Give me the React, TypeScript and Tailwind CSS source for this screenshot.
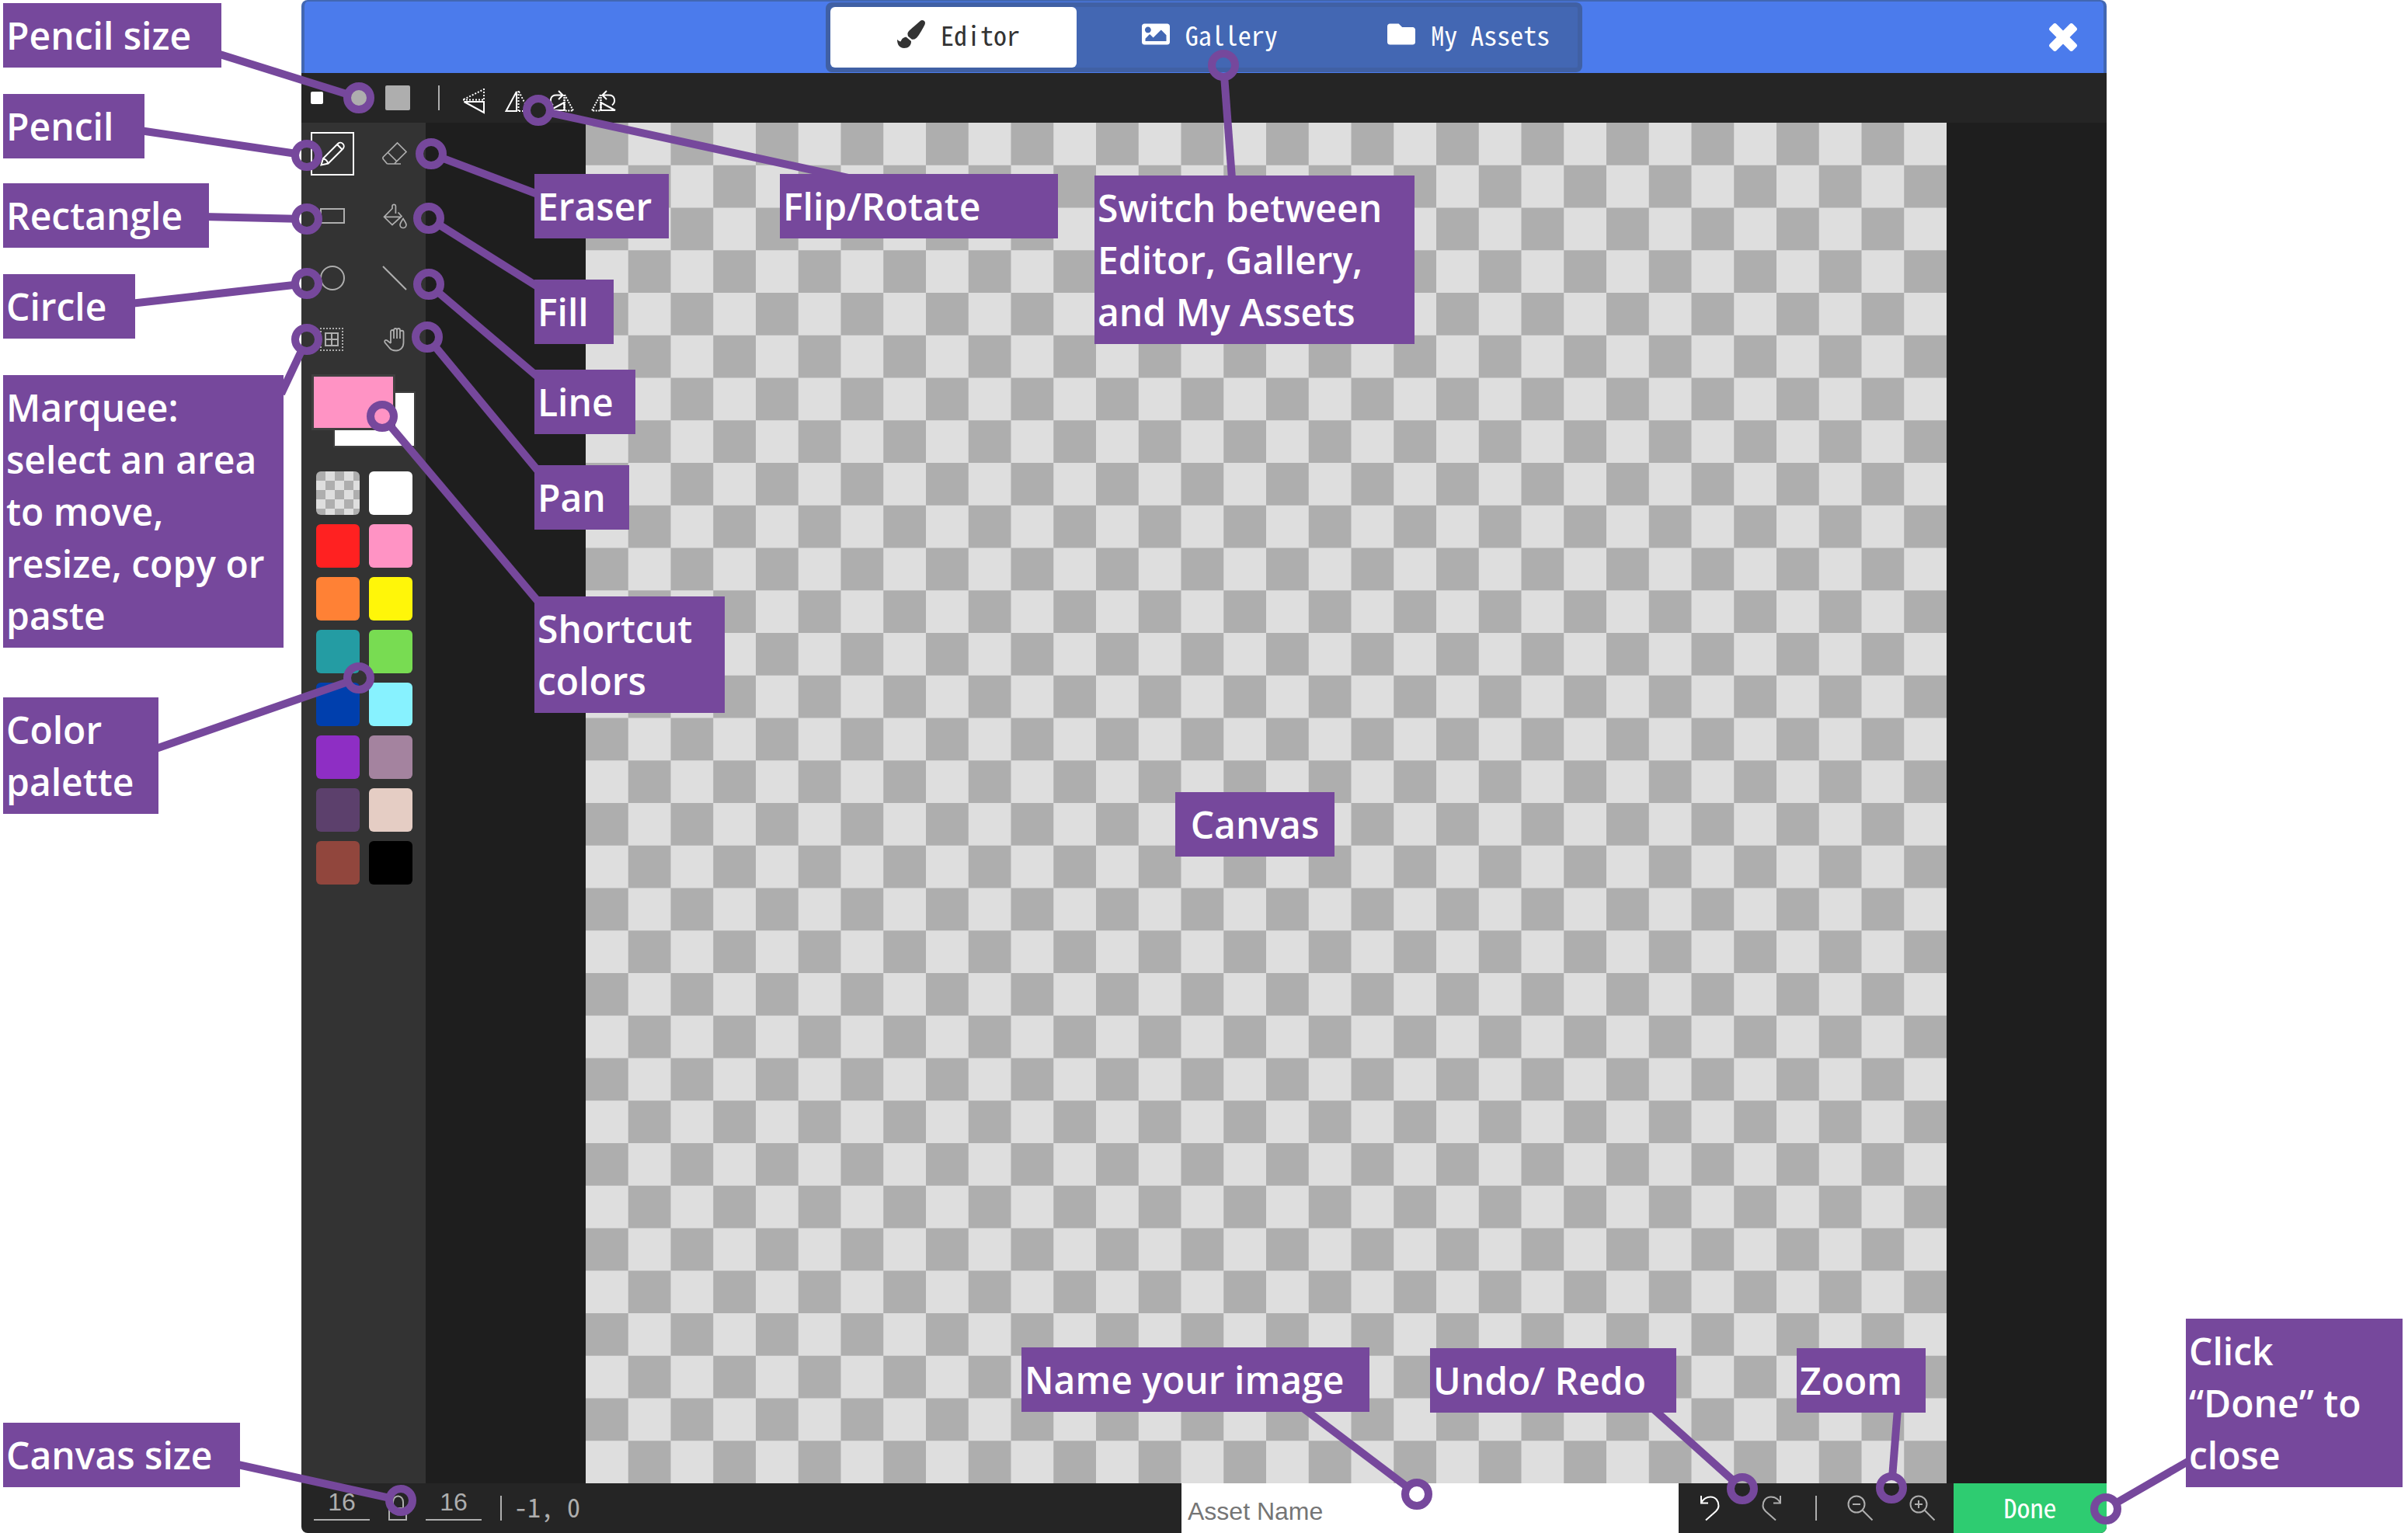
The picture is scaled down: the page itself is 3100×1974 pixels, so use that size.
import React from "react";
import { FaFolder, FaImage, FaPaintBrush } from "react-icons/fa";

const MONO = "font-['Noto_Sans_Mono_CJK_SC','Liberation_Mono',monospace]";

type IconProps = { children: React.ReactNode; className?: string };

function Icon({ children, className = "" }: IconProps) {
  return (
    <svg
      viewBox="0 0 32 32"
      className={`size-8 shrink-0 overflow-visible ${className}`}
      fill="none"
      stroke="currentColor"
      strokeWidth="2"
      aria-hidden="true"
    >
      {children}
    </svg>
  );
}

const tools = [
  {
    name: "Pencil",
    icon: (
      <>
        <path d="M1.5 30.5 4 22 23 3a4.6 4.6 0 0 1 6.5 6.5L10.500 28.500Z" />
        <path d="M4 22.500c3 0 6 3 6 6M22 4l6.500 6.500" />
      </>
    ),
  },
  {
    name: "Eraser",
    icon: <path d="M6.500 29 1 22.500V20.500L19.500 2 31 13.500 16 28.500M6.500 29H24M7.500 14.500 18.500 25.500" strokeWidth="1.700" />,
  },
  { name: "Rectangle", icon: <rect x="1" y="7" width="30" height="18" /> },
  {
    name: "Fill",
    icon: (
      <>
        <path d="M13 6.500 2.500 17.300 13 27.500 25 16.500 20.500 11.500M2.500 17.300H25M13 7V3.500a2.200 2.200 0 0 1 4.400 0V13" strokeWidth="1.700" />
        <path d="M27 19.500c-2.500 4-4 6-4 8a4 4 0 0 0 8 0c0-2-1.500-4-4-8Z" strokeWidth="1.700" />
      </>
    ),
  },
  { name: "Circle", icon: <circle cx="16" cy="16" r="15" /> },
  { name: "Line", icon: <path d="M1 1 31 31" /> },
  {
    name: "Marquee",
    icon: (
      <>
        <path d="M0 1H30M0 29H30M1 0V30M29 0V30" strokeDasharray="2 2" />
        <path d="M7 7H23V23H7ZM15 7V23M7 15H23" />
      </>
    ),
  },
  {
    name: "Pan",
    icon: (
      <path
        d="M11 20V5a2 2 0 0 1 4 0V14M15 5V3a2 2 0 0 1 4 0V14M19 3a2 2 0 0 1 4 0V14M23 6a2.200 2.200 0 0 1 4.500 0V19c0 6.500-4 10.500-9.500 10.500-4 0-7-1-9-4L3.500 19c-1-2.500 1-4 3-2.500L11 20"
        strokeWidth="1.800"
      />
    ),
  },
];

const rotateShape = (
  <>
    <path d="M11.500 18 30 28H11.500Z" />
    <path d="M11 8 0 28.500H11" strokeDasharray="2 1.500" />
    <path d="M11.500 8V28" strokeDasharray="2 1" strokeWidth="2.500" />
    <path d="M19 3 13.500 8.500 19 14M14 8.500H22c8 0 9 9 4 13" />
  </>
);

const transforms = [
  {
    name: "Flip vertical",
    icon: (
      <>
        <path d="M3.500 17H29V31Z" />
        <path d="M2 14.500H29M29 0V14M3 14 29 1" strokeDasharray="2 2" />
      </>
    ),
  },
  {
    name: "Flip horizontal",
    icon: (
      <>
        <path d="M15 4V29H1.500Z" />
        <path d="M17.500 3V29M18 29H31M18 4 31 29" strokeDasharray="2 2" />
      </>
    ),
  },
  { name: "Rotate clockwise", icon: <g transform="translate(32 0) scale(-1 1)">{rotateShape}</g> },
  { name: "Rotate counterclockwise", icon: rotateShape },
];

const palette = [
  "bg-[conic-gradient(#dedede_25%,#aeaeae_0_50%,#dedede_0_75%,#aeaeae_0)] bg-size-[24px_24px]",
  "bg-white",
  "bg-[#ff2121]",
  "bg-[#ff93c4]",
  "bg-[#ff8135]",
  "bg-[#fff609]",
  "bg-[#249ca3]",
  "bg-[#78dc52]",
  "bg-[#003fad]",
  "bg-[#87f2ff]",
  "bg-[#8e2ec4]",
  "bg-[#a4839f]",
  "bg-[#5c406c]",
  "bg-[#e5cdc4]",
  "bg-[#91463d]",
  "bg-black",
];

// Each callout: label box, and the line from the box (x1, y1) to its ring (x2, y2).
const callouts = [
  { text: "Pencil size", box: "left-[4px] top-[4px] w-[281px]", line: [280, 69, 462, 126] },
  { text: "Pencil", box: "left-[4px] top-[121px] w-[182px]", line: [180, 168, 395, 200] },
  { text: "Rectangle", box: "left-[4px] top-[236px] w-[265px]", line: [262, 279, 395, 282] },
  { text: "Circle", box: "left-[4px] top-[353px] w-[170px]", line: [168, 391, 395, 365] },
  {
    text: "Marquee:\nselect an area\nto move,\nresize, copy or\npaste",
    box: "left-[4px] top-[483px] w-[361px]",
    line: [362, 507, 395, 437],
  },
  { text: "Color\npalette", box: "left-[4px] top-[898px] w-[200px]", line: [198, 965, 462, 873] },
  { text: "Canvas size", box: "left-[4px] top-[1832px] w-[305px]", line: [302, 1885, 516, 1932] },
  { text: "Eraser", box: "left-[688px] top-[224px] w-[173px]", line: [692, 250, 555, 198] },
  { text: "Fill", box: "left-[688px] top-[360px] w-[102px]", line: [692, 369, 552, 281] },
  { text: "Line", box: "left-[688px] top-[476px] w-[130px]", line: [692, 485, 552, 366] },
  { text: "Pan", box: "left-[688px] top-[599px] w-[122px]", line: [694, 608, 550, 434] },
  { text: "Shortcut\ncolors", box: "left-[688px] top-[768px] w-[245px]", line: [694, 776, 492, 536] },
  { text: "Flip/Rotate", box: "left-[1004px] top-[224px] w-[358px]", line: [1110, 233, 693, 142] },
  {
    text: "Switch between\nEditor, Gallery,\nand My Assets",
    box: "left-[1409px] top-[226px] w-[412px]",
    line: [1586, 230, 1575, 84],
  },
  { text: "Canvas", box: "left-[1513px] top-[1020px] w-[205px] text-center", line: null },
  { text: "Name your image", box: "left-[1315px] top-[1735px] w-[448px]", line: [1676, 1812, 1824, 1924] },
  { text: "Undo/ Redo", box: "left-[1841px] top-[1736px] w-[317px]", line: [2126, 1812, 2243, 1917] },
  { text: "Zoom", box: "left-[2313px] top-[1736px] w-[166px]", line: [2443, 1814, 2435, 1916] },
  { text: "Click\n“Done” to\nclose", box: "left-[2814px] top-[1698px] w-[279px]", line: [2820, 1880, 2711, 1943] },
];

function Callouts() {
  return (
    <div className="pointer-events-none absolute inset-0 overflow-hidden font-['Open_Sans',sans-serif]">
      <svg className="absolute inset-0 h-full w-full" fill="none" stroke="#76489c" strokeWidth="10" aria-hidden="true">
        {callouts.map(({ text, line }) => {
          if (!line) return null;
          const [x1, y1, x2, y2] = line;
          const length = Math.hypot(x2 - x1, y2 - y1);
          const stop = (length - 15) / length;
          return (
            <g key={text}>
              <line x1={x1} y1={y1} x2={x1 + (x2 - x1) * stop} y2={y1 + (y2 - y1) * stop} />
              <circle cx={x2} cy={y2} r="15" />
            </g>
          );
        })}
      </svg>
      {callouts.map(({ text, box }) => (
        <p
          key={text}
          className={`absolute bg-[#76489c] px-1 py-2 text-[48px] leading-[67px] font-[650] whitespace-pre text-white ${box}`}
        >
          {text}
        </p>
      ))}
    </div>
  );
}

function Header() {
  return (
    <header className="flex h-[94px] shrink-0 items-center rounded-t-lg border-x-4 border-t-2 border-[#4267b2] bg-[#4b7bec] px-8">
      <div className="flex-1" />
      <nav
        className={`grid h-[90px] w-[974px] grid-cols-3 rounded-lg border-6 border-[#4060a4] bg-[#4367b3] text-[34px] text-white ${MONO}`}
      >
        <button className="mr-1 flex items-center gap-5 rounded-md bg-white pb-2 pl-[86px] text-[#333]">
          <FaPaintBrush className="size-9" aria-hidden="true" />
          Editor
        </button>
        <button className="flex items-center gap-5 pb-2 pl-20">
          <FaImage className="size-9" aria-hidden="true" />
          Gallery
        </button>
        <button className="flex items-center gap-5 pb-2 pl-[76px]">
          <FaFolder className="size-9" aria-hidden="true" />
          My Assets
        </button>
      </nav>
      <div className="flex flex-1 justify-end">
        <button aria-label="Close" className="p-0.5 text-white">
          <svg viewBox="-18 -18 36 36" className="size-9" fill="currentColor" aria-hidden="true">
            <rect x="-21" y="-6" width="42" height="12" rx="3" transform="rotate(45)" />
            <rect x="-21" y="-6" width="42" height="12" rx="3" transform="rotate(-45)" />
          </svg>
        </button>
      </div>
    </header>
  );
}

function Toolbar() {
  return (
    <div className="flex h-16 shrink-0 items-center bg-[#252525] pl-3 text-white">
      <button aria-label="Small pencil" className="size-4 rounded-xs bg-white" />
      <button aria-label="Medium pencil" className="ml-[34px] size-6 rounded-xs bg-[#aeaeae]" />
      <button aria-label="Large pencil" className="ml-[22px] size-8 rounded-xs bg-[#aeaeae]" />
      <div className="mr-4 ml-9 h-8 w-0.5 bg-[#aeaeae]" />
      {transforms.map(({ name, icon }) => (
        <button key={name} aria-label={name} className="flex h-full w-14 items-center justify-center pt-2">
          <Icon>{icon}</Icon>
        </button>
      ))}
    </div>
  );
}

function SidePanel() {
  return (
    <aside className="flex w-40 shrink-0 flex-col items-center bg-[#333] text-[#aeaeae]">
      <div className="grid grid-cols-2">
        {tools.map(({ name, icon }) => (
          <div key={name} className="flex size-20 items-center justify-center">
            <button
              aria-label={name}
              className={`flex size-14 items-center justify-center ${name === "Pencil" ? "border-2 border-white text-white" : ""}`}
            >
              <Icon>{icon}</Icon>
            </button>
          </div>
        ))}
      </div>
      <div className="relative mt-1 h-[94px] w-[134px]">
        <button
          aria-label="Background color"
          className="absolute right-0 bottom-0 h-[72px] w-[106px] border-2 border-[#3f3f3f] bg-white"
        />
        <button
          aria-label="Foreground color"
          className="absolute top-0 left-0 h-[72px] w-[108px] border-3 border-[#3f3f3f] bg-[#ff93c4]"
        />
      </div>
      <div className="mt-[31px] grid grid-cols-2 gap-3 pl-0.5">
        {palette.map((color, i) => (
          <button key={color} aria-label={`Color ${i}`} className={`size-14 rounded-md ${color}`} />
        ))}
      </div>
    </aside>
  );
}

function Footer() {
  const sizeInput =
    "mb-2 h-10 w-[72px] border-b-2 border-[#aeaeae] bg-transparent pb-1.5 text-center text-[32px] leading-8 outline-none font-['Liberation_Sans',sans-serif]";
  const action = "flex h-full w-20 items-center justify-center";
  return (
    <footer className="flex h-16 shrink-0 items-center overflow-hidden rounded-b-lg bg-[#252525] pl-4 text-[#aeaeae]">
      <input aria-label="Canvas width" className={sizeInput} defaultValue="16" />
      <button aria-label="Lock aspect ratio" className="mx-5">
        <Icon>
          <path d="M5 16H27V31H5ZM10 16V8a6 7 0 0 1 13 0V16" />
        </Icon>
      </button>
      <input aria-label="Canvas height" className={sizeInput} defaultValue="16" />
      <div className="mr-4 ml-6 h-8 w-0.5 bg-[#aeaeae]" />
      <span className={`pb-1 text-[34px] leading-8 ${MONO}`}>-1, 0</span>
      <input
        aria-label="Asset Name"
        placeholder="Asset Name"
        className="ml-auto h-full w-[640px] bg-white px-2 pt-2 text-[32px] text-[#333] outline-none placeholder:text-[#757575] font-['Liberation_Sans',sans-serif]"
      />
      <button aria-label="Undo" className={`${action} text-white`}>
        <Icon>
          <path d="M5 0V9.500H14M5 9C8 4 12 1.500 17 1.500c7 0 10.500 5.500 10.500 11.500 0 3-1.500 5-3.500 7L11 31.500" />
        </Icon>
      </button>
      <button aria-label="Redo" className={action}>
        <Icon>
          <path d="M27 0V9.500H18M27 9C24 4 20 1.500 15 1.500 8 1.500 4.500 7 4.500 13c0 3 1.500 5 3.500 7L21 31.500" />
        </Icon>
      </button>
      <div className="mx-4 h-8 w-0.5 bg-[#aeaeae]" />
      <button aria-label="Zoom out" className={action}>
        <Icon>
          <path d="M18.500 18.500 31.500 31.500M6 11H16" />
          <circle cx="11" cy="11" r="10.500" />
        </Icon>
      </button>
      <button aria-label="Zoom in" className={action}>
        <Icon>
          <path d="M18.500 18.500 31.500 31.500M6 11H16M11 6V16" />
          <circle cx="11" cy="11" r="10.500" />
        </Icon>
      </button>
      <button className={`h-full w-[197px] bg-[#2ecc71] pb-1 text-[34px] text-white ${MONO}`}>Done</button>
    </footer>
  );
}

export default function App() {
  return (
    <div className="relative h-screen bg-white px-[388px]">
      <main className="flex h-full flex-col">
        <Header />
        <Toolbar />
        <div className="flex min-h-0 flex-1">
          <SidePanel />
          <div className="flex min-w-0 flex-1 justify-center bg-[#1e1e1e]">
            <div className="aspect-square h-full bg-[conic-gradient(#dedede_25%,#aeaeae_0_50%,#dedede_0_75%,#aeaeae_0)] bg-size-[6.25%_6.25%]" />
          </div>
        </div>
        <Footer />
      </main>
      <Callouts />
    </div>
  );
}
